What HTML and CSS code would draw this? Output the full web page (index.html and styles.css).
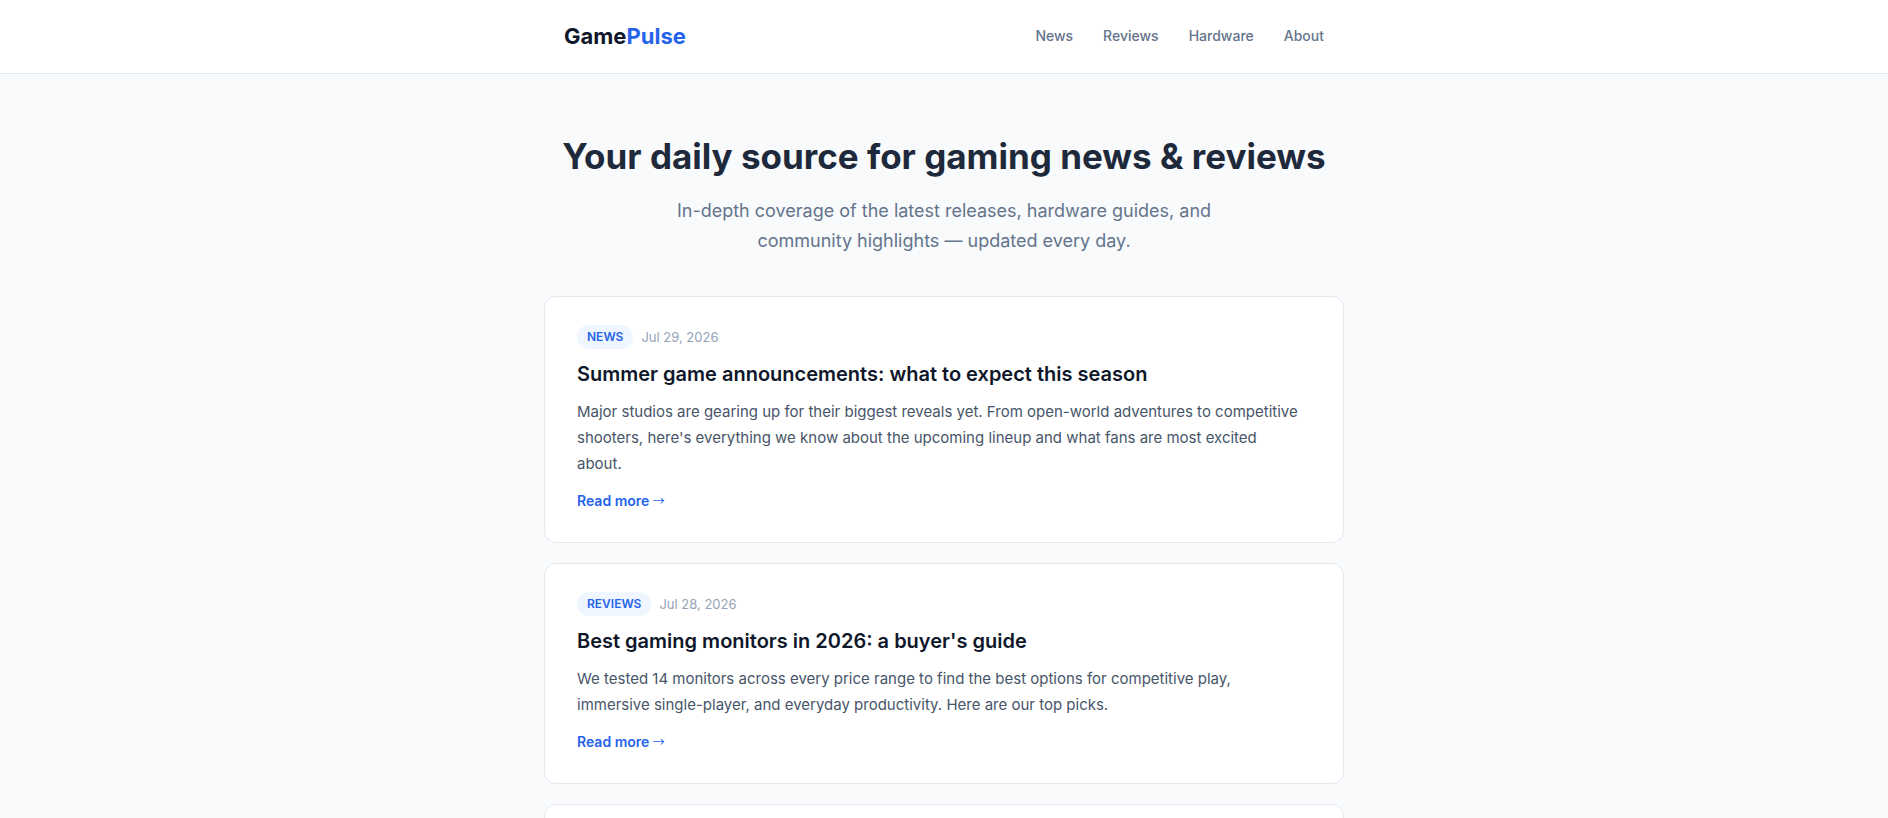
FILE: index.html
```html
<!DOCTYPE html>
<html lang="en">
<head>
<meta charset="utf-8">
<meta name="viewport" content="width=device-width, initial-scale=1">
<title>GamePulse</title>
<link rel="stylesheet" href="styles.css">
</head>
<body>
<header class="site-header">
  <div class="header-inner">
    <a class="logo" href="#">Game<span>Pulse</span></a>
    <nav class="nav">
      <a href="#">News</a>
      <a href="#">Reviews</a>
      <a href="#">Hardware</a>
      <a href="#">About</a>
    </nav>
  </div>
</header>
<main class="container">
  <section class="hero">
    <h1>Your daily source for gaming news &amp; reviews</h1>
    <p>In-depth coverage of the latest releases, hardware guides, and community highlights — updated every day.</p>
  </section>
  <article class="card">
    <div class="meta"><span class="tag">News</span><time datetime="2026-07-29">Jul 29, 2026</time></div>
    <h2>Summer game announcements: what to expect this season</h2>
    <p>Major studios are gearing up for their biggest reveals yet. From open-world adventures to competitive shooters, here's everything we know about the upcoming lineup and what fans are most excited about.</p>
    <a class="more" href="#">Read more <span class="arrow">→</span></a>
  </article>
  <article class="card">
    <div class="meta"><span class="tag">Reviews</span><time datetime="2026-07-28">Jul 28, 2026</time></div>
    <h2>Best gaming monitors in 2026: a buyer's guide</h2>
    <p>We tested 14 monitors across every price range to find the best options for competitive play, immersive single-player, and everyday productivity. Here are our top picks.</p>
    <a class="more" href="#">Read more <span class="arrow">→</span></a>
  </article>
  <article class="card"></article>
</main>
</body>
</html>
```
FILE: styles.css
```css
* { margin: 0; padding: 0; box-sizing: border-box; }
html { scrollbar-width: none; }
body {
  font-family: Inter, "Liberation Sans", sans-serif;
  background: #f8fafc;
  color: #1e293b;
  line-height: 1.6;
}
a { text-decoration: none; }
.site-header {
  background: #fff;
  border-bottom: 1px solid #e2e8f0;
  padding: 18px 20px;
}
.header-inner {
  max-width: 760px;
  margin: 0 auto;
  display: flex;
  align-items: baseline;
  justify-content: space-between;
}
.logo { font-size: 22px; line-height: 37px; font-weight: 700; color: #0f172a; }
.logo span { color: #2563eb; }
.nav { display: flex; gap: 30px; padding-bottom: 2px; align-self: center; }
.nav a { font-size: 14px; line-height: 24px; font-weight: 500; color: #64748b; }
.container { max-width: 800px; margin: 0 auto; }
.hero { text-align: center; padding: 60px 0 40px; }
.hero h1 { font-size: 35px; line-height: 44px; font-weight: 700; margin-bottom: 18px; }
.hero p { font-size: 18px; line-height: 30px; color: #64748b; max-width: 560px; margin: 0 auto; }
.card {
  display: flex;
  flex-direction: column;
  align-items: flex-start;
  background: #fff;
  border: 1px solid #e2e8f0;
  border-radius: 12px;
  padding: 28px 32px 29px;
  margin-bottom: 20px;
}
.meta {
  display: flex;
  align-items: center;
  gap: 8px;
  margin-bottom: 8px;
  font-size: 13px;
  line-height: 20px;
  color: #94a3b8;
}
.tag {
  background: #eff6ff;
  color: #2563eb;
  font-size: 12px;
  font-weight: 600;
  text-transform: uppercase;
  padding: 2px 10px;
  border-radius: 20px;
}
.card h2 { font-size: 20px; line-height: 34px; font-weight: 600; color: #0f172a; margin-bottom: 8px; }
.card p { font-size: 15px; line-height: 26px; color: #475569; max-width: 724px; }
.more { margin-top: 12px; font-size: 14px; line-height: 24px; font-weight: 600; color: #2563eb; }
.arrow { font-family: "Noto Sans CJK JP", sans-serif; font-size: 12px; line-height: 1; font-weight: 400; }
```
